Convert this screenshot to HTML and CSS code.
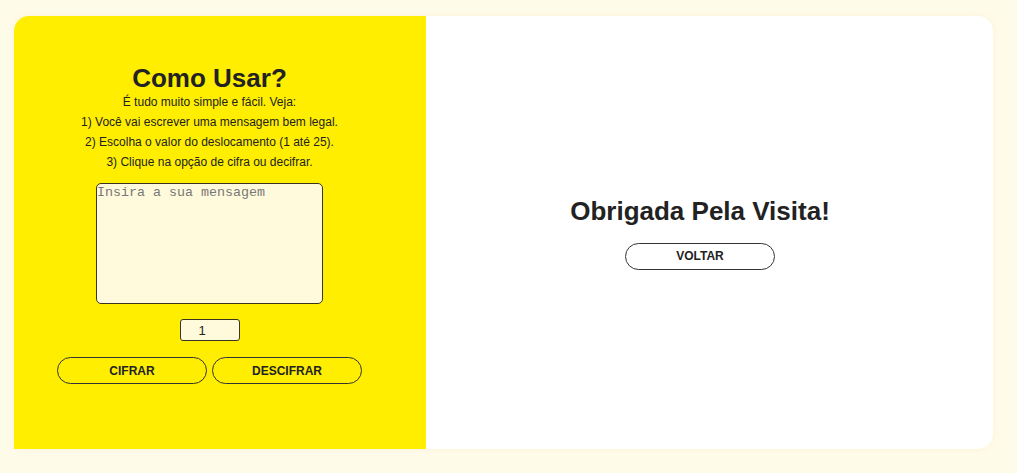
FILE: index.html
```html
<!DOCTYPE html>
<html lang="pt-BR">
<head>
<meta charset="utf-8">
<title>Cifra de César</title>
<link rel="stylesheet" href="styles.css">
</head>
<body>
  <main class="card">
    <section class="panel-left">
      <div class="instructions">
        <h1 class="title">Como Usar?</h1>
        <p class="line">É tudo muito simple e fácil. Veja:</p>
        <p class="line">1) Você vai escrever uma mensagem bem legal.</p>
        <p class="line">2) Escolha o valor do deslocamento (1 até 25).</p>
        <p class="line">3) Clique na opção de cifra ou decifrar.</p>
      </div>
      <textarea class="message" placeholder="Insira a sua mensagem"></textarea>
      <input class="offset" type="number" min="1" max="25" value="1">
      <div class="actions">
        <button class="btn" type="button">CIFRAR</button>
        <button class="btn" type="button">DESCIFRAR</button>
      </div>
    </section>
    <section class="panel-right">
      <h2 class="title">Obrigada Pela Visita!</h2>
      <button class="btn btn-back" type="button">VOLTAR</button>
    </section>
  </main>
</body>
</html>
```

FILE: styles.css
```css
* { box-sizing: border-box; }

html, body {
  margin: 0;
  padding: 0;
}

body {
  background: #fffbe9;
  font-family: "Liberation Sans", Arial, sans-serif;
  color: #222;
  padding: 16px 24px 24px 14px;
}

.card {
  display: flex;
  height: 433px;
  background: #ffffff;
  border-radius: 15px;
  box-shadow: 0 0 6px rgba(240, 230, 190, 0.35);
}

.panel-left {
  width: 412px;
  flex: none;
  background: #ffee00;
  border-radius: 15px 0 0 0;
  display: flex;
  flex-direction: column;
  align-items: center;
  justify-content: center;
  padding: 0 21px 17px 0;
}

.instructions {
  text-align: center;
}

.title {
  margin: 0;
  font-size: 26px;
  font-weight: bold;
  line-height: 28px;
  color: #222;
}

.line {
  margin: 0;
  font-size: 12px;
  line-height: 20px;
}

.message {
  margin-top: 11px;
  width: 227px;
  height: 121px;
  background: #fffadb;
  border: 1px solid #3a3520;
  border-radius: 5px;
  padding: 1px 0;
  font-family: "Liberation Mono", monospace;
  font-size: 13.33px;
  color: #222;
  resize: none;
  outline: none;
}

.message::placeholder {
  color: #777;
}

.offset {
  margin-top: 15px;
  width: 60px;
  height: 22px;
  background: #fffadb;
  border: 1px solid #3a3520;
  border-radius: 3px;
  font: 13px "Liberation Sans", Arial, sans-serif;
  color: #222;
  text-align: center;
  padding: 1px 2px;
}

.actions {
  margin-top: 16px;
  display: flex;
  gap: 5px;
}

.btn {
  width: 150px;
  height: 27px;
  border: 1px solid #333;
  border-radius: 14px;
  background: transparent;
  font-family: "Liberation Sans", Arial, sans-serif;
  font-size: 12px;
  font-weight: bold;
  color: #222;
  padding: 0;
  cursor: pointer;
}

.panel-right {
  flex: 1;
  display: flex;
  flex-direction: column;
  align-items: center;
  justify-content: center;
  padding-right: 19px;
}

.panel-right .title {
  line-height: 30px;
}

.btn-back {
  margin-top: 17px;
  background: #fff;
}
```
